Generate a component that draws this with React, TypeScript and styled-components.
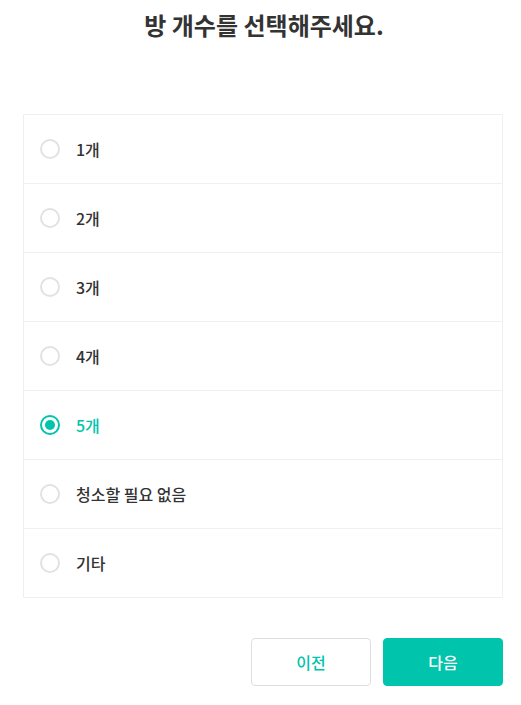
import React, { useState } from 'react'
import styled, { createGlobalStyle } from 'styled-components'

const GlobalStyle = createGlobalStyle`
  html, body {
    margin: 0;
    padding: 0;
    background: #fff;
  }
  body {
    font-family: 'Noto Sans CJK KR', 'Noto Sans', sans-serif;
    color: #333;
  }
  * {
    box-sizing: border-box;
  }
`

const Page = styled.div`
  width: 521px;
  padding: 8px 18px 0 23px;
  display: flex;
  flex-direction: column;
`

const Title = styled.h2`
  margin: 0;
  padding-left: 2px;
  text-align: center;
  font-size: 24px;
  line-height: 34px;
  font-weight: 700;
  color: #333;
`

const OptionList = styled.ul`
  list-style: none;
  margin: 72px 0 0;
  padding: 0;
  width: 480px;
  border: 1px solid #f0f0f0;
`

const OptionRow = styled.li`
  height: 68px;
  box-sizing: content-box;
  display: flex;
  align-items: center;
  padding-left: 16px;
  gap: 16px;
  cursor: pointer;

  & + & {
    border-top: 1px solid #f0f0f0;
  }
`

const Radio = styled.span<{ $checked: boolean }>`
  width: 20px;
  height: 20px;
  border-radius: 50%;
  border: 2px solid ${({ $checked }) => ($checked ? '#00c4ac' : '#e2e2e2')};
  display: flex;
  align-items: center;
  justify-content: center;

  &::after {
    content: '';
    width: 10px;
    height: 10px;
    border-radius: 50%;
    background: #00c4ac;
    display: ${({ $checked }) => ($checked ? 'block' : 'none')};
  }
`

const OptionLabel = styled.span<{ $checked: boolean }>`
  font-size: 16px;
  font-weight: 500;
  color: ${({ $checked }) => ($checked ? '#00c4ac' : '#333')};
  line-height: 20px;
`

const ButtonRow = styled.div`
  display: flex;
  justify-content: flex-end;
  gap: 12px;
  margin-top: 40px;
  width: 480px;
`

const Button = styled.button<{ $primary?: boolean }>`
  width: 120px;
  height: 48px;
  border-radius: 4px;
  font-family: inherit;
  font-size: 16px;
  font-weight: 500;
  cursor: pointer;
  border: 1px solid ${({ $primary }) => ($primary ? '#00c4ac' : '#dedede')};
  background: ${({ $primary }) => ($primary ? '#00c4ac' : '#fff')};
  color: ${({ $primary }) => ($primary ? '#fff' : '#00c4ac')};
`

const OPTIONS = ['1개', '2개', '3개', '4개', '5개', '청소할 필요 없음', '기타']

const App = () => {
  const [selected, setSelected] = useState(4)

  return (
    <Page>
      <GlobalStyle />
      <Title>방 개수를 선택해주세요.</Title>
      <OptionList>
        {OPTIONS.map((label, i) => (
          <OptionRow key={label} onClick={() => setSelected(i)}>
            <Radio $checked={selected === i} />
            <OptionLabel $checked={selected === i}>{label}</OptionLabel>
          </OptionRow>
        ))}
      </OptionList>
      <ButtonRow>
        <Button>이전</Button>
        <Button $primary>다음</Button>
      </ButtonRow>
    </Page>
  )
}

export default App
